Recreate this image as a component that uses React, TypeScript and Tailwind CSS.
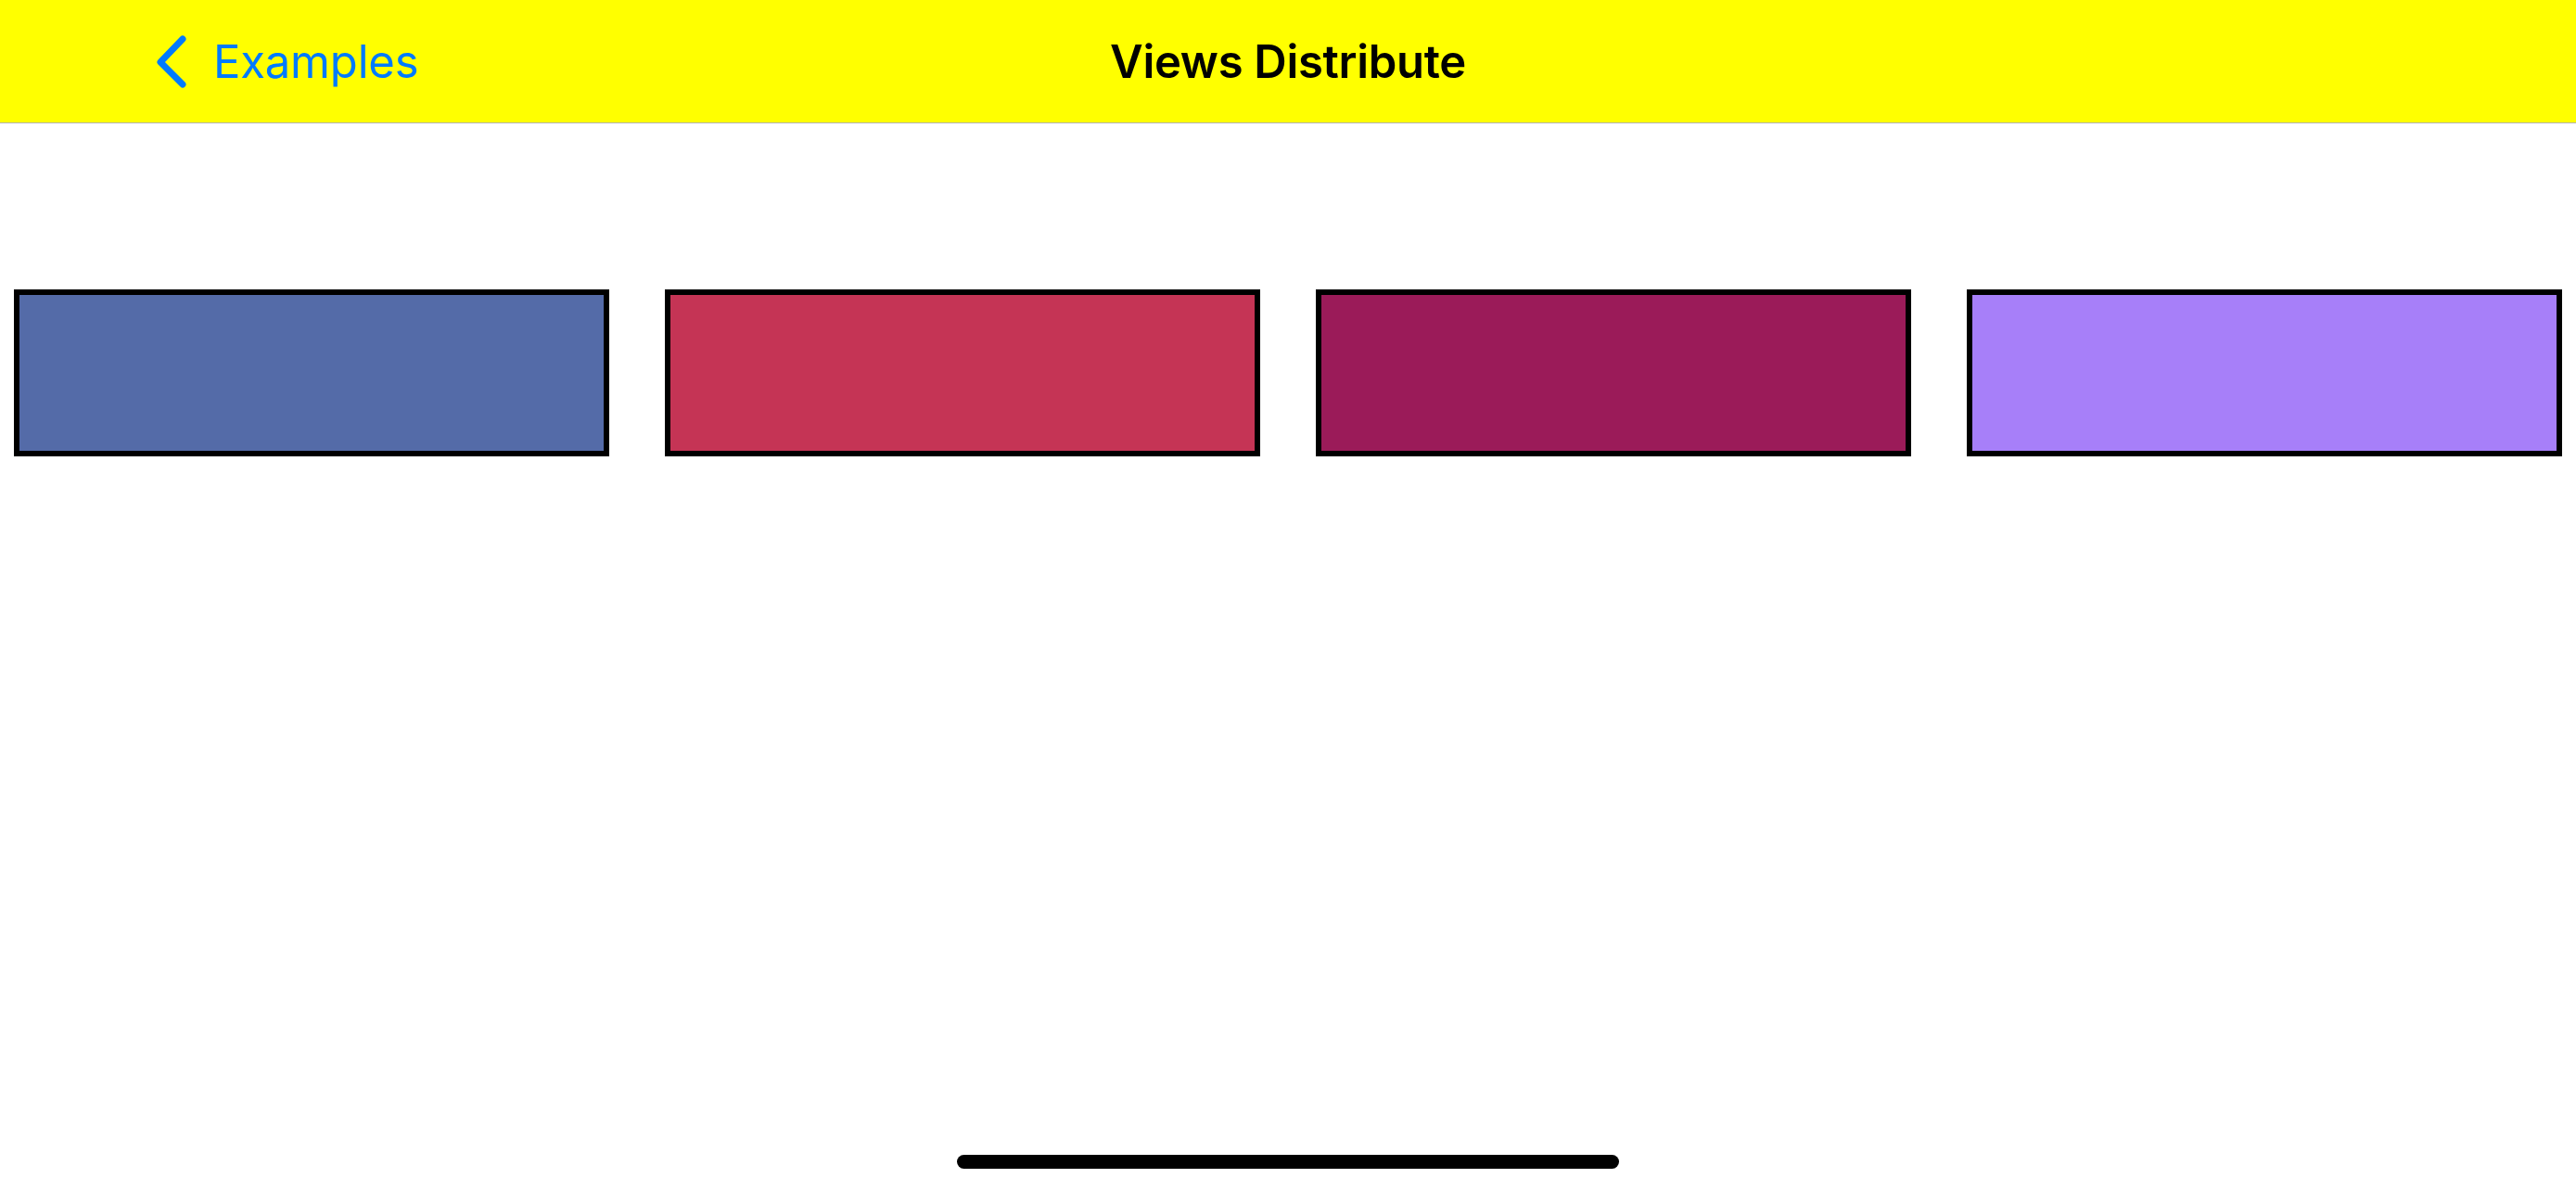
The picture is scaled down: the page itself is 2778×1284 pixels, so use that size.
import React from 'react';

const boxes = ['bg-[#546ba8]', 'bg-[#c53455]', 'bg-[#9b1b59]', 'bg-[#a77ff9]'];

export default function App() {
    return (
        <div className="relative w-[2778px] h-[1284px] bg-white overflow-hidden font-['Inter','Liberation_Sans',sans-serif]">
            {/* Nav bar */}
            <div className="relative h-[133px] bg-[#ffff00] border-b border-[#b2b2b2] flex items-center justify-center">
                <div className="absolute left-[164px] top-0 h-[132px] flex items-center gap-[26px] text-[#007aff]">
                    <svg width="40" height="60" viewBox="0 0 40 60" fill="none">
                        <path d="M33 6 L9 31 L33 55" stroke="#007aff" strokeWidth="7" strokeLinecap="round" strokeLinejoin="round" />
                    </svg>
                    <span className="text-[49px] leading-none tracking-[-0.2px]">Examples</span>
                </div>
                <span className="text-[49px] font-semibold leading-none text-black tracking-[-0.3px]">Views Distribute</span>
            </div>

            {/* Distributed views */}
            <div className="mt-[179px] px-[15px] flex gap-[60px]">
                {boxes.map((c) => (
                    <div key={c} className={`flex-1 h-[180px] border-[6px] border-black ${c}`} />
                ))}
            </div>

            {/* Home indicator */}
            <div className="absolute left-[1032px] top-[1245px] w-[714px] h-[15px] rounded-full bg-black" />
        </div>
    );
}
